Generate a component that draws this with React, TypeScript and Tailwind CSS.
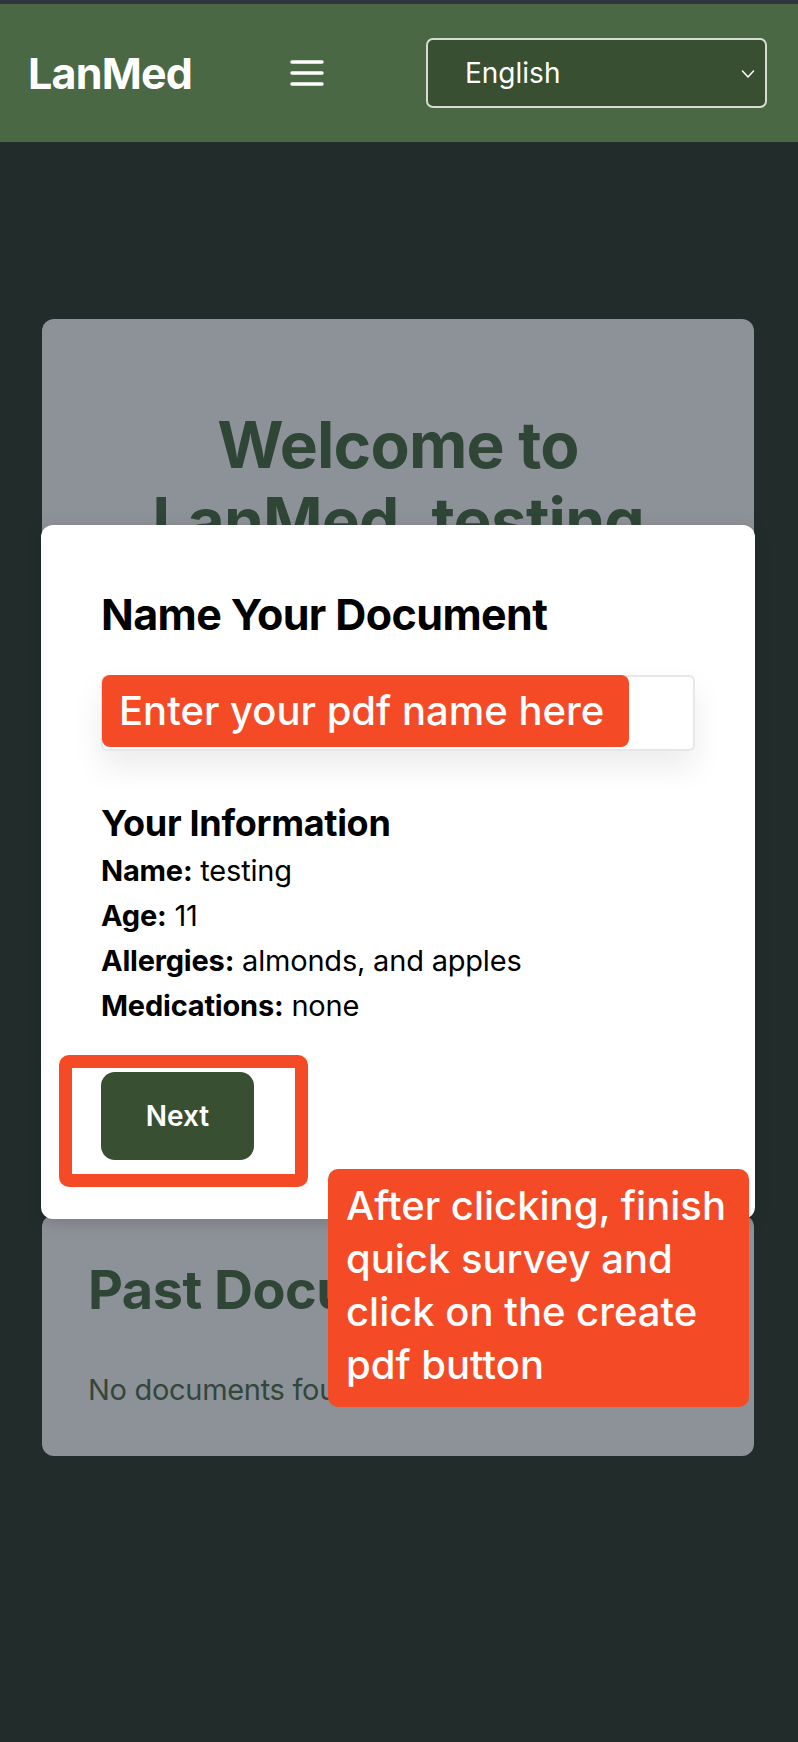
import React, { useState } from 'react';

const info = [
  { label: 'Name:', value: 'testing' },
  { label: 'Age:', value: '11' },
  { label: 'Allergies:', value: 'almonds, and apples' },
  { label: 'Medications:', value: 'none' },
];

const App = () => {
  const [docName, setDocName] = useState('');
  const [language, setLanguage] = useState('English');

  return (
    <div className="relative min-h-[1742px] w-full bg-[#222d2b] font-['Inter','Liberation_Sans',sans-serif]">
      <div className="h-[4px] bg-[#2f3540]" />

      {/* Header */}
      <header className="flex h-[138px] items-center bg-[#4b6844] pl-[28px] pr-[31px]">
        <span className="text-[43px] font-bold leading-none tracking-[-0.8px] text-white">LanMed</span>
        <button className="ml-[98px] flex h-[34px] w-[34px] items-center justify-center">
          <svg width="34" height="28" viewBox="0 0 34 28" fill="none">
            <path d="M2 3h30M2 14h30M2 25h30" stroke="white" strokeWidth="3.5" strokeLinecap="round" />
          </svg>
        </button>
        <div className="relative ml-auto flex h-[70px] w-[341px] items-center rounded-[7px] border-2 border-[#d6dcd2] bg-[#384f31] pl-[37px]">
          <span className="text-[28px] text-white">{language}</span>
          <svg className="absolute right-[10px] top-[29px]" width="14" height="10" viewBox="0 0 14 10" fill="none">
            <path d="M1.5 2l5.5 6 5.5-6" stroke="white" strokeWidth="1.5" strokeLinecap="round" strokeLinejoin="round" />
          </svg>
          <select
            value={language}
            onChange={e => setLanguage(e.target.value)}
            className="absolute inset-0 opacity-0"
          >
            <option>English</option>
            <option>Español</option>
          </select>
        </div>
      </header>

      {/* Main cards */}
      <main className="flex flex-col gap-[24px] pl-[42px] pr-[44px] pt-[177px]">
        <section className="h-[872px] rounded-[12px] bg-[#8d9198] px-[48px] pt-[88px] text-center">
          <h1 className="text-[64px] font-bold leading-[76px] tracking-[-0.8px] text-[#2f4636]">
            Welcome to
            <br />
            LanMed, testing
          </h1>
        </section>
        <section className="h-[241px] rounded-[12px] bg-[#8d9198] px-[46px] pt-[42px]">
          <h2 className="text-[54px] font-bold leading-[65px] tracking-[-0.5px] text-[#2f4636]">Past Documents</h2>
          <p className="mt-[50px] text-[29px] leading-[36px] tracking-[-0.3px] text-[#33463a]">No documents found</p>
        </section>
      </main>

      {/* Modal */}
      <div className="absolute left-[41px] top-[525px] h-[694px] w-[714px] rounded-[12px] bg-white px-[60px] pt-[57px] shadow-[0_4px_16px_rgba(0,0,0,0.15)]">
        <h2 className="text-[43px] font-bold leading-[64px] tracking-[-0.6px] text-black">Name Your Document</h2>

        <div className="relative mt-[29px]">
          <input
            value={docName}
            onChange={e => setDocName(e.target.value)}
            className="h-[76px] w-full rounded-[6px] border-2 border-[#e5e7eb] bg-white px-[16px] text-[30px] shadow-[0_16px_32px_rgba(0,0,0,0.08)] outline-none"
          />
          <div className="pointer-events-none absolute left-[1px] top-0 flex h-[72px] w-[527px] items-center rounded-[8px] bg-[#f44b26] pl-[17px] text-[40px] font-medium text-white">
            Enter your pdf name here
          </div>
        </div>

        <h3 className="mt-[48px] text-[36px] font-bold leading-[48px] tracking-[-0.3px] text-black">Your Information</h3>
        <div className="mt-[1px]">
          {info.map(item => (
            <p key={item.label} className="text-[29px] leading-[45px] tracking-[-0.2px] text-black">
              <span className="font-bold">{item.label}</span> {item.value}
            </p>
          ))}
        </div>

        <button className="mt-[44px] h-[88px] w-[153px] rounded-[14px] bg-[#384f31] text-[28px] font-semibold text-white">
          Next
        </button>

        {/* annotation outline around Next */}
        <div className="pointer-events-none absolute left-[18px] top-[530px] h-[132px] w-[249px] rounded-[10px] border-[13px] border-[#f44b26]" />
      </div>

      {/* annotation callout */}
      <div className="absolute left-[328px] top-[1169px] w-[421px] rounded-[10px] bg-[#f44b26] px-[18px] pb-[16px] pt-[10px] text-[40px] font-medium leading-[53px] text-white">
        After clicking, finish quick survey and click on the create pdf button
      </div>
    </div>
  );
};

export default App;
